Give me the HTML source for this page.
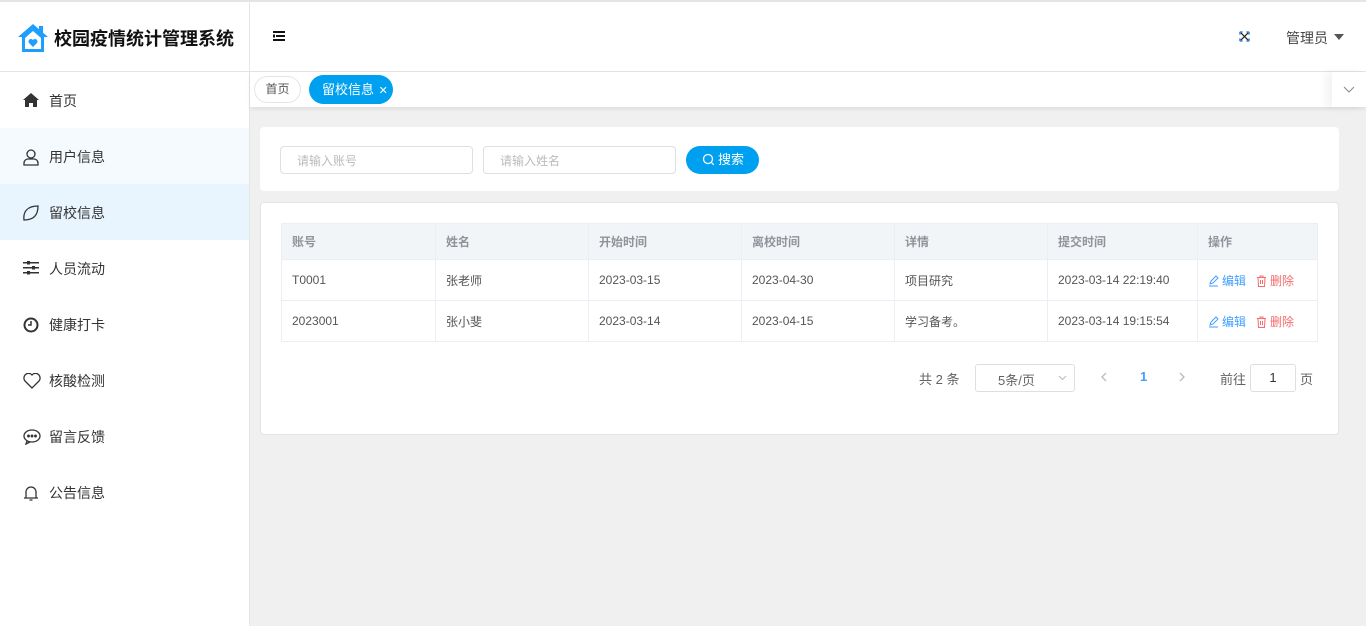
<!DOCTYPE html>
<html><head><meta charset="utf-8"><style>
*{box-sizing:border-box;margin:0;padding:0}
body{width:1366px;height:626px;overflow:hidden;background:#f0f0f0;font-family:"Liberation Sans","Noto Sans CJK SC",sans-serif;font-size:13px;color:#333;position:relative}
.a{position:absolute}
.side{left:0;top:0;width:250px;height:626px;background:#fff;border-right:1px solid #e6e6e6;border-top:2px solid #e4e4e4}
.logo{left:0;top:0;width:249px;height:72px;border-bottom:1px solid #e4e4e4}
.logo span{position:absolute;left:54px;top:25px;font-size:18px;font-weight:bold;color:#111}
.mi{position:absolute;left:0;width:249px;height:56px;font-size:14px;color:#333}
.mi span{position:absolute;left:49px;top:19px}
.mi svg{position:absolute;left:23px;top:21px}
.hdr{left:250px;top:0;width:1116px;height:72px;background:#fff;border-top:2px solid #e4e4e4;border-bottom:1px solid #e4e4e4}
.tabs{left:250px;top:72px;width:1116px;height:35px;background:#fff;box-shadow:0 2px 4px rgba(0,0,0,.08)}
.card{background:#fff;border-radius:4px}
.inp{height:28px;border:1px solid #dcdfe6;border-radius:4px;color:#bbb;font-size:12px;padding:5px 16px;background:#fff}
table{border-collapse:collapse;font-size:12px}
td,th{border:1px solid #ebeef5;text-align:left;padding-left:10px;height:41px;color:#555;font-weight:normal}
th{background:#f2f5f8;color:#909399;font-weight:bold;height:36px}
.e{color:#409eff}.d{color:#f56c6c}
svg.i{vertical-align:-2px;margin-right:3px}
</style></head><body>
<div class="a side"></div>
<div class="a logo">
<svg class="a" style="left:17px;top:23px" width="32" height="30" viewBox="0 0 32 30"><path d="M16 1L1 14h4v15h22V14h4L16 1z" fill="#1e9fff"/><rect x="22" y="3" width="4" height="7" fill="#1e9fff"/><path d="M8 15L16 8l8 7v11H8z" fill="#fff"/><path d="M16 24l-4-4a2.3 2.3 0 0 1 4-3 2.3 2.3 0 0 1 4 3z" fill="#1e9fff"/></svg>
<span>校园疫情统计管理系统</span></div>
<div class="mi" style="top:72px"><svg width="16" height="14" viewBox="0 0 16 14"><path d="M8 0L0 7h2v7h4v-4h4v4h4V7h2z" fill="#333"/></svg><span>首页</span></div>
<div class="mi" style="top:128px;background:#f5fafe"><svg width="16" height="17" viewBox="0 0 16 17" fill="none" stroke="#333" stroke-width="1.3"><circle cx="8" cy="5" r="4"/><path d="M1 16v-2a4 4 0 0 1 4-4h6a4 4 0 0 1 4 4v2z"/></svg><span>用户信息</span></div>
<div class="mi" style="top:184px;background:#e8f4fe"><svg width="16" height="16" viewBox="0 0 16 16" fill="none" stroke="#333" stroke-width="1.3"><path d="M1 15C0 7 4 1 15 1c0 9-4 14-14 14z"/></svg><span>留校信息</span></div>
<div class="mi" style="top:240px"><svg width="16" height="14" viewBox="0 0 16 14" fill="#333"><rect y="1" width="16" height="1.5"/><rect y="6" width="16" height="1.5"/><rect y="11" width="16" height="1.5"/><rect x="4" y="0" width="3" height="3.5"/><rect x="9" y="5" width="3" height="3.5"/><rect x="4" y="10" width="3" height="3.5"/></svg><span>人员流动</span></div>
<div class="mi" style="top:296px"><svg width="16" height="16" viewBox="0 0 16 16" fill="none" stroke="#333" stroke-width="2"><circle cx="8" cy="8" r="6.5"/><path d="M8 4v4H5" stroke-width="1.5"/></svg><span>健康打卡</span></div>
<div class="mi" style="top:352px"><svg width="18" height="16" viewBox="0 0 18 16" fill="none" stroke="#333" stroke-width="1.3"><path d="M9 15L2 8a4 4 0 0 1 7-6 4 4 0 0 1 7 6z"/></svg><span>核酸检测</span></div>
<div class="mi" style="top:408px"><svg width="18" height="16" viewBox="0 0 18 16" fill="none" stroke="#333" stroke-width="1.3"><ellipse cx="9" cy="7" rx="8" ry="6"/><path d="M4 12l-1 3 4-2"/><circle cx="5.5" cy="7" r=".8" fill="#333"/><circle cx="9" cy="7" r=".8" fill="#333"/><circle cx="12.5" cy="7" r=".8" fill="#333"/></svg><span>留言反馈</span></div>
<div class="mi" style="top:464px"><svg width="16" height="16" viewBox="0 0 16 16" fill="none" stroke="#333" stroke-width="1.3"><path d="M3 13V7a5 5 0 0 1 10 0v6M1 13h14M6.5 15h3"/></svg><span>公告信息</span></div>

<div class="a hdr"></div>
<svg class="a" style="left:273px;top:31px" width="12" height="10" viewBox="0 0 12 10" fill="#111"><rect x="0" y="0" width="12" height="2"/><rect x="3" y="4" width="9" height="2"/><rect x="0" y="8" width="12" height="2"/><rect x="0" y="3.5" width="2" height="3"/></svg>
<svg class="a" style="left:1239px;top:31px" width="11" height="11" viewBox="0 0 12 12" stroke="#222" stroke-width="1.3" fill="none"><path d="M2 2l8 8M10 2L2 10"/><path d="M1 1h3M1 1v3M11 11h-3M11 11v-3M11 1h-3M11 1v3M1 11h3M1 11v-3" stroke="#1e6fd0"/></svg>
<div class="a" style="left:1286px;top:28px;font-size:14px;color:#444">管理员</div>
<div class="a" style="left:1334px;top:34px;border:5px solid transparent;border-top:6px solid #555;border-bottom:0"></div>

<div class="a tabs"></div>
<div class="a" style="left:254px;top:76px;width:47px;height:27px;border:1px solid #e4e4e4;border-radius:14px;font-size:12px;color:#555;text-align:center;line-height:25px">首页</div>
<div class="a" style="left:309px;top:75px;width:84px;height:29px;background:#00a0f0;border-radius:15px;font-size:13px;color:#fff;line-height:29px;padding-left:13px">留校信息 <span style="font-size:11px;margin-left:1px">✕</span></div>
<div class="a" style="left:1332px;top:72px;width:34px;height:35px;background:#fff;box-shadow:-6px 0 8px rgba(0,0,0,.05)"></div>
<svg class="a" style="left:1343px;top:86px" width="12" height="7" viewBox="0 0 12 7" fill="none" stroke="#888"><path d="M1 1l5 5 5-5"/></svg>

<div class="a card" style="left:260px;top:127px;width:1079px;height:64px"></div>
<div class="a inp" style="left:280px;top:146px;width:193px">请输入账号</div>
<div class="a inp" style="left:483px;top:146px;width:193px">请输入姓名</div>
<div class="a" style="left:686px;top:146px;width:73px;height:28px;background:#00a0f0;border-radius:14px;color:#fff;font-size:13px;line-height:27px;padding-left:32px">搜索</div>
<svg class="a" style="left:702px;top:153px" width="13" height="13" viewBox="0 0 13 13" fill="none" stroke="#fff" stroke-width="1.3"><circle cx="6" cy="6" r="4.5"/><path d="M9.3 9.3l2.5 2.5"/></svg>

<div class="a card" style="left:260px;top:202px;width:1079px;height:233px;border:1px solid #e4e4e4"></div>
<table class="a" style="left:281px;top:223px;width:1037px">
<tr><th style="width:154px">账号</th><th style="width:153px">姓名</th><th style="width:153px">开始时间</th><th style="width:153px">离校时间</th><th style="width:153px">详情</th><th style="width:150px">提交时间</th><th>操作</th></tr>
<tr><td>T0001</td><td>张老师</td><td>2023-03-15</td><td>2023-04-30</td><td>项目研究</td><td>2023-03-14 22:19:40</td><td><span class="e"><svg class="i" width="11" height="12" viewBox="0 0 11 12" fill="none" stroke="#409eff"><path d="M2 9l1-3 5-5 2 2-5 5zM1 11h9"/></svg>编辑</span>&nbsp;&nbsp;&nbsp;<span class="d"><svg class="i" width="11" height="12" viewBox="0 0 11 12" fill="none" stroke="#f56c6c"><path d="M1 2.5h9M4 2.5V1h3v1.5M2 2.5l.5 9h6l.5-9M4.5 5v4M6.5 5v4"/></svg>删除</span></td></tr>
<tr><td>2023001</td><td>张小斐</td><td>2023-03-14</td><td>2023-04-15</td><td>学习备考。</td><td>2023-03-14 19:15:54</td><td><span class="e"><svg class="i" width="11" height="12" viewBox="0 0 11 12" fill="none" stroke="#409eff"><path d="M2 9l1-3 5-5 2 2-5 5zM1 11h9"/></svg>编辑</span>&nbsp;&nbsp;&nbsp;<span class="d"><svg class="i" width="11" height="12" viewBox="0 0 11 12" fill="none" stroke="#f56c6c"><path d="M1 2.5h9M4 2.5V1h3v1.5M2 2.5l.5 9h6l.5-9M4.5 5v4M6.5 5v4"/></svg>删除</span></td></tr>
</table>
<div class="a" style="left:919px;top:369px;color:#606266">共 2 条</div>
<div class="a" style="left:975px;top:364px;width:100px;height:28px;border:1px solid #dcdfe6;border-radius:3px;padding:5px 0 0 22px;color:#606266">5条/页</div>
<svg class="a" style="left:1058px;top:375px" width="9" height="6" viewBox="0 0 9 6" fill="none" stroke="#bbb"><path d="M1 1l3.5 3.5L8 1"/></svg>
<svg class="a" style="left:1101px;top:372px" width="6" height="10" viewBox="0 0 6 10" fill="none" stroke="#bbb" stroke-width="1.3"><path d="M5 1L1 5l4 4"/></svg>
<div class="a" style="left:1140px;top:369px;color:#409eff;font-weight:bold">1</div>
<svg class="a" style="left:1179px;top:372px" width="6" height="10" viewBox="0 0 6 10" fill="none" stroke="#bbb" stroke-width="1.3"><path d="M1 1l4 4-4 4"/></svg>
<div class="a" style="left:1220px;top:369px;color:#606266">前往</div>
<div class="a" style="left:1250px;top:364px;width:46px;height:28px;border:1px solid #dcdfe6;border-radius:3px;text-align:center;line-height:26px">1</div>
<div class="a" style="left:1300px;top:369px;color:#606266">页</div>
</body></html>
